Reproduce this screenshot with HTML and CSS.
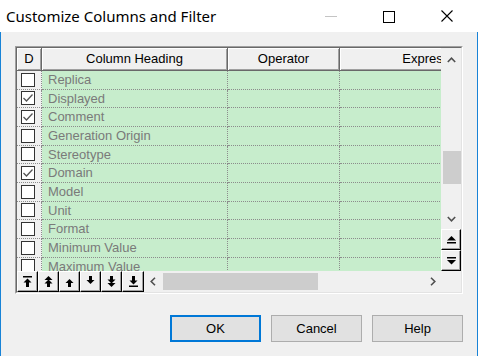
FILE: index.html
```html
<!DOCTYPE html>
<html lang="en">
<head>
    <meta charset="UTF-8">
    <title>Customize Columns and Filter</title>
    <link rel="stylesheet" href="styles.css">
</head>
<body>
    <div class="window">
        <div class="title-bar">
            <div class="title">Customize Columns and Filter</div>
            <div class="controls">
                <span class="ctl"><i class="min-line"></i></span>
                <span class="ctl"><i class="max-box"></i></span>
                <span class="ctl">
                    <svg width="12" height="12" viewBox="0 0 12 12"><path d="M0.5 0.5 L11.5 11.5 M11.5 0.5 L0.5 11.5" stroke="#000" stroke-width="1.1" fill="none"/></svg>
                </span>
            </div>
        </div>

        <div class="content">
            <div class="frame">
                <div class="frame-inner">
                    <div class="frame-main">
                        <div class="grid-view">
                            <div class="row head-row">
                                <div class="hcell">D</div>
                                <div class="hcell">Column Heading</div>
                                <div class="hcell">Operator</div>
                                <div class="hcell">Expression</div>
                            </div>
                            <div id="rows"></div>
                        </div>
                        <div class="vscroll">
                            <div class="vs-arrow vs-up">
                                <svg width="9" height="6" viewBox="0 0 9 6"><polyline points="0.8,5 4.5,1.2 8.2,5" fill="none" stroke="#505050" stroke-width="1.6"/></svg>
                            </div>
                            <div class="vs-track"><div class="vs-thumb"></div></div>
                            <div class="vs-arrow vs-down">
                                <svg width="9" height="6" viewBox="0 0 9 6"><polyline points="0.8,1 4.5,4.8 8.2,1" fill="none" stroke="#505050" stroke-width="1.6"/></svg>
                            </div>
                            <div class="raised vs-btn">
                                <svg width="9" height="8" viewBox="0 0 9 8"><polygon points="4.5,0 9,4.5 0,4.5" fill="#000"/><rect x="0" y="6" width="9" height="1.5" fill="#000"/></svg>
                            </div>
                            <div class="raised vs-btn">
                                <svg width="9" height="8" viewBox="0 0 9 8"><rect x="0" y="0" width="9" height="1.5" fill="#000"/><polygon points="0,3 9,3 4.5,7.5" fill="#000"/></svg>
                            </div>
                        </div>
                    </div>
                    <div class="frame-bottom">
                        <div class="toolbar">
                            <div class="raised tb-btn">
                                <svg width="9" height="11" viewBox="0 0 9 11"><rect x="0" y="0" width="9" height="1.5"/><polygon points="4.5,2.5 8.5,6.5 0.5,6.5"/><rect x="3" y="6" width="3" height="5"/></svg>
                            </div>
                            <div class="raised tb-btn">
                                <svg width="9" height="11" viewBox="0 0 9 11"><polygon points="4.5,0 8.5,4 0.5,4"/><polygon points="4.5,3.5 8.5,7.5 0.5,7.5"/><rect x="3" y="7" width="3" height="4"/></svg>
                            </div>
                            <div class="raised tb-btn">
                                <svg width="9" height="11" viewBox="0 0 9 11"><polygon points="4.5,3 8.5,7 0.5,7"/><rect x="3" y="6.5" width="3" height="4.5"/></svg>
                            </div>
                            <div class="raised tb-btn">
                                <svg width="9" height="11" viewBox="0 0 9 11"><rect x="3" y="0" width="3" height="4.5"/><polygon points="0.5,4 8.5,4 4.5,8"/></svg>
                            </div>
                            <div class="raised tb-btn">
                                <svg width="9" height="11" viewBox="0 0 9 11"><rect x="3" y="0" width="3" height="4"/><polygon points="0.5,3.5 8.5,3.5 4.5,7.5"/><polygon points="0.5,7 8.5,7 4.5,11"/></svg>
                            </div>
                            <div class="raised tb-btn last">
                                <svg width="9" height="11" viewBox="0 0 9 11"><rect x="3" y="0" width="3" height="5"/><polygon points="0.5,4.5 8.5,4.5 4.5,8.5"/><rect x="0" y="9.5" width="9" height="1.5"/></svg>
                            </div>
                        </div>
                        <div class="hscroll">
                            <div class="hs-arrow">
                                <svg width="6" height="9" viewBox="0 0 6 9"><polyline points="5,0.8 1.2,4.5 5,8.2" fill="none" stroke="#505050" stroke-width="1.6"/></svg>
                            </div>
                            <div class="hs-track"><div class="hs-thumb"></div></div>
                            <div class="hs-arrow">
                                <svg width="6" height="9" viewBox="0 0 6 9"><polyline points="1,0.8 4.8,4.5 1,8.2" fill="none" stroke="#505050" stroke-width="1.6"/></svg>
                            </div>
                        </div>
                        <div class="corner"></div>
                    </div>
                </div>
            </div>

            <div class="actions">
                <button class="btn btn-default">OK</button>
                <button class="btn">Cancel</button>
                <button class="btn">Help</button>
            </div>
        </div>
    </div>

    <script>
        const columns = [
            { name: 'Replica', shown: false },
            { name: 'Displayed', shown: true },
            { name: 'Comment', shown: true },
            { name: 'Generation Origin', shown: false },
            { name: 'Stereotype', shown: false },
            { name: 'Domain', shown: true },
            { name: 'Model', shown: false },
            { name: 'Unit', shown: false },
            { name: 'Format', shown: false },
            { name: 'Minimum Value', shown: false },
            { name: 'Maximum Value', shown: false }
        ];

        const check = '<svg width="12" height="12" viewBox="0 0 12 12"><polyline points="1.5,6 4.5,9 10.5,2.5" fill="none" stroke="#555" stroke-width="1.3"/></svg>';

        const rows = document.getElementById('rows');
        rows.innerHTML = columns.map(function(c) {
            return `
                <div class="row">
                    <div class="cell dcell"><span class="checkbox">${c.shown ? check : ''}</span></div>
                    <div class="cell">${c.name}</div>
                    <div class="cell"></div>
                    <div class="cell"></div>
                </div>`;
        }).join('');
    </script>
</body>
</html>
```

FILE: styles.css
```css
body {
    margin: 0;
    font-family: "Liberation Sans", Arial, sans-serif;
    font-size: 13px;
}

.window {
    width: 478px;
    height: 356px;
    background: #f0f0f0;
    display: flex;
    flex-direction: column;
    overflow: hidden;
}

/* title bar */
.title-bar {
    height: 32px;
    background: #fff;
    display: flex;
    align-items: center;
    flex-shrink: 0;
}

.title {
    flex: 1;
    padding-left: 6px;
    font-family: "Noto Sans", sans-serif;
    font-size: 15px;
    color: #000;
}

.controls {
    display: flex;
    margin-right: 2px;
}

.ctl {
    width: 58px;
    height: 32px;
    display: flex;
    align-items: center;
    justify-content: center;
}

.min-line {
    width: 12px;
    height: 1px;
    background: #c4c4c4;
}

.max-box {
    width: 10px;
    height: 10px;
    border: 1px solid #000;
    margin-top: 1px;
}

/* dialog body */
.content {
    flex: 1;
    border-left: 1px solid #1883d7;
    border-right: 1px solid #1883d7;
    padding: 14px 14px 0 14px;
    display: flex;
    flex-direction: column;
}

.frame {
    width: 448px;
    box-sizing: border-box;
    border: 1px solid;
    border-color: #a0a0a0 #fff #fff #a0a0a0;
}

.frame-inner {
    border: 1px solid;
    border-color: #696969 #e3e3e3 #e3e3e3 #696969;
}

.frame-main {
    display: flex;
    height: 223px;
}

.grid-view {
    width: 424px;
    overflow: hidden;
    background: #c7edcc;
}

.row {
    display: grid;
    grid-template-columns: 25px 186px 112px 190px;
    height: 18.67px;
}

.head-row {
    height: 23px;
}

.hcell {
    box-sizing: border-box;
    background: #f0f0f0;
    border-right: 1px solid #696969;
    border-bottom: 1px solid #696969;
    box-shadow: inset 1px 1px #fff, inset -1px -1px #a0a0a0;
    text-align: center;
    line-height: 22px;
    color: #000;
    white-space: nowrap;
    overflow: hidden;
}

.cell {
    box-sizing: border-box;
    border-right: 1px dotted #8c8c8c;
    border-bottom: 1px dotted #8c8c8c;
    padding-left: 6px;
    line-height: 18px;
    color: #7a7a7a;
    white-space: nowrap;
    overflow: hidden;
}

.dcell {
    background: #f0f0f0;
    padding-left: 4px;
    display: flex;
    align-items: center;
}

.checkbox {
    width: 14px;
    height: 14px;
    box-sizing: border-box;
    border: 1px solid #333;
    background: #fff;
    display: flex;
    align-items: center;
    justify-content: center;
}

/* scrollbars */
.vscroll {
    width: 20px;
    display: flex;
    flex-direction: column;
    background: #f0f0f0;
}

.vs-arrow {
    display: flex;
    align-items: center;
    justify-content: center;
    padding-left: 1px;
}

.vs-up {
    height: 24px;
}

.vs-down {
    height: 20px;
}

.vs-track {
    flex: 1;
}

.vs-thumb {
    margin: 79px 0 0 2px;
    width: 18px;
    height: 33px;
    background: #cdcdcd;
}

.raised {
    box-sizing: border-box;
    background: #f0f0f0;
    border-top: 1px solid #fff;
    border-left: 1px solid #fff;
    border-right: 1px solid #000;
    border-bottom: 1px solid #000;
    box-shadow: inset -1px -1px #a0a0a0;
    display: flex;
    align-items: center;
    justify-content: center;
}

.vs-btn {
    height: 21px;
}

.frame-bottom {
    display: flex;
    height: 21px;
}

.toolbar {
    display: flex;
    width: 127px;
}

.tb-btn {
    width: 21px;
    height: 21px;
}

.tb-btn.last {
    width: 22px;
}

.hscroll {
    flex: 1;
    display: flex;
    align-items: center;
}

.hs-arrow {
    width: 17px;
    display: flex;
    justify-content: center;
}

.hs-track {
    flex: 1;
}

.hs-thumb {
    margin-left: 2px;
    width: 155px;
    height: 17px;
    background: #cdcdcd;
}

.corner {
    width: 20px;
}

/* buttons */
.actions {
    display: flex;
    justify-content: flex-end;
    gap: 10px;
    margin-top: 21px;
}

.btn {
    width: 91px;
    height: 27px;
    background: #e1e1e1;
    border: 1px solid #adadad;
    font-family: "Liberation Sans", Arial, sans-serif;
    font-size: 13px;
    color: #000;
    padding: 0;
}

.btn-default {
    border-color: #0078d7;
    box-shadow: inset 0 0 0 1px #0078d7;
}
```
